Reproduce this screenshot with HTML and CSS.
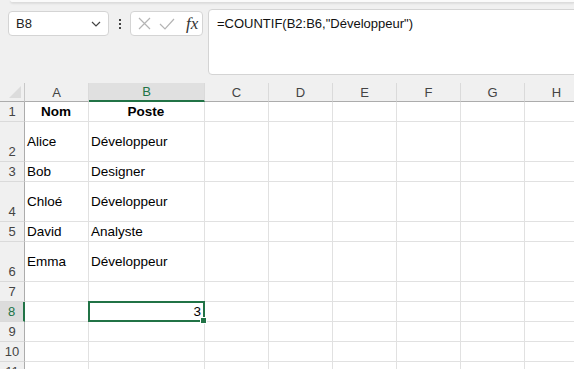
FILE: index.html
```html
<!DOCTYPE html>
<html>
<head>
    <title>COUNTIF</title>
    <link rel="stylesheet" href="styles.css">
</head>
<body>
    <div class="ribbon-edge"></div>

    <div class="formula-row">
        <div class="name-box">
            <span>B8</span>
            <svg width="10" height="6" viewBox="0 0 10 6"><path d="M1 1l4 4 4-4" fill="none" stroke="#444" stroke-width="1.2"/></svg>
        </div>
        <div class="dots"><i></i><i></i><i></i></div>
        <div class="fx-buttons">
            <svg width="13" height="13" viewBox="0 0 13 13"><path d="M1 1l11 11M12 1L1 12" stroke="#b4b4b4" stroke-width="1.2"/></svg>
            <svg width="16" height="14" viewBox="0 0 16 14"><path d="M1 7l5 5L15 2" fill="none" stroke="#b4b4b4" stroke-width="1.2"/></svg>
            <span class="fx">fx</span>
        </div>
        <div class="formula-bar">=COUNTIF(B2:B6,"Développeur")</div>
    </div>

    <div class="sheet">
        <div class="corner"></div>
        <div class="col-head">A</div>
        <div class="col-head active">B</div>
        <div class="col-head">C</div>
        <div class="col-head">D</div>
        <div class="col-head">E</div>
        <div class="col-head">F</div>
        <div class="col-head">G</div>
        <div class="col-head">H</div>

        <div class="row-head">1</div>
        <div class="cell bold center">Nom</div>
        <div class="cell bold center">Poste</div>
        <div class="cell"></div><div class="cell"></div><div class="cell"></div><div class="cell"></div><div class="cell"></div><div class="cell"></div>

        <div class="row-head">2</div>
        <div class="cell">Alice</div>
        <div class="cell">Développeur</div>
        <div class="cell"></div><div class="cell"></div><div class="cell"></div><div class="cell"></div><div class="cell"></div><div class="cell"></div>

        <div class="row-head">3</div>
        <div class="cell">Bob</div>
        <div class="cell">Designer</div>
        <div class="cell"></div><div class="cell"></div><div class="cell"></div><div class="cell"></div><div class="cell"></div><div class="cell"></div>

        <div class="row-head">4</div>
        <div class="cell">Chloé</div>
        <div class="cell">Développeur</div>
        <div class="cell"></div><div class="cell"></div><div class="cell"></div><div class="cell"></div><div class="cell"></div><div class="cell"></div>

        <div class="row-head">5</div>
        <div class="cell">David</div>
        <div class="cell">Analyste</div>
        <div class="cell"></div><div class="cell"></div><div class="cell"></div><div class="cell"></div><div class="cell"></div><div class="cell"></div>

        <div class="row-head">6</div>
        <div class="cell">Emma</div>
        <div class="cell">Développeur</div>
        <div class="cell"></div><div class="cell"></div><div class="cell"></div><div class="cell"></div><div class="cell"></div><div class="cell"></div>

        <div class="row-head">7</div>
        <div class="cell"></div><div class="cell"></div><div class="cell"></div><div class="cell"></div><div class="cell"></div><div class="cell"></div><div class="cell"></div><div class="cell"></div>

        <div class="row-head active">8</div>
        <div class="cell"></div>
        <div class="cell right selected">3<span class="handle"></span></div>
        <div class="cell"></div><div class="cell"></div><div class="cell"></div><div class="cell"></div><div class="cell"></div><div class="cell"></div>

        <div class="row-head">9</div>
        <div class="cell"></div><div class="cell"></div><div class="cell"></div><div class="cell"></div><div class="cell"></div><div class="cell"></div><div class="cell"></div><div class="cell"></div>

        <div class="row-head">10</div>
        <div class="cell"></div><div class="cell"></div><div class="cell"></div><div class="cell"></div><div class="cell"></div><div class="cell"></div><div class="cell"></div><div class="cell"></div>

        <div class="row-head">11</div>
        <div class="cell"></div><div class="cell"></div><div class="cell"></div><div class="cell"></div><div class="cell"></div><div class="cell"></div><div class="cell"></div><div class="cell"></div>
    </div>
</body>
</html>
```

FILE: styles.css
```css
body {
    margin: 0;
    background-color: #f0f0f0;
    font-family: "Liberation Sans", Arial, sans-serif;
    overflow: hidden;
    width: 574px;
    height: 369px;
}
.ribbon-edge {
    height: 2px;
    margin-left: 10px;
    background-color: #fafafa;
    border-bottom: 1px solid #dcdcdc;
    border-bottom-left-radius: 6px;
    box-shadow: 0 1px 2px rgba(0, 0, 0, 0.08);
}
.formula-row {
    display: flex;
    align-items: flex-start;
    margin-top: 6px;
    padding-left: 8px;
}
.formula-row > * {
    flex: none;
}
.name-box {
    box-sizing: border-box;
    width: 101px;
    height: 25px;
    margin-top: 2px;
    display: flex;
    align-items: center;
    justify-content: space-between;
    padding: 0 7px 0 7px;
    background-color: white;
    border: 1px solid #d4d4d4;
    border-radius: 4px;
    font-size: 13px;
    color: #222;
}
.dots {
    width: 21px;
    height: 25px;
    margin-top: 2px;
    display: flex;
    flex-direction: column;
    align-items: center;
    justify-content: center;
    gap: 2px;
}
.dots i {
    width: 2px;
    height: 2px;
    background-color: #444;
}
.fx-buttons {
    box-sizing: border-box;
    width: 73px;
    height: 25px;
    margin-top: 2px;
    display: flex;
    align-items: center;
    gap: 8px;
    padding-left: 7px;
    background-color: white;
    border: 1px solid #d4d4d4;
    border-radius: 4px;
}
.fx {
    font-family: "Liberation Serif", serif;
    font-style: italic;
    font-size: 17px;
    color: #333;
    margin-left: 3px;
}
.formula-bar {
    box-sizing: border-box;
    width: 380px;
    height: 66px;
    margin-left: 5px;
    padding: 6px 8px;
    background-color: white;
    border: 1px solid #d4d4d4;
    border-radius: 4px;
    font-size: 13px;
    color: #111;
}
.sheet {
    display: grid;
    grid-template-columns: 25px 64px 116px repeat(6, 64px);
    grid-template-rows: 19px 20px 40px 20px 40px 20px 40px 20px 20px 20px 20px 20px;
    margin-top: 8px;
    background-color: white;
}
.corner {
    position: relative;
    background-color: #f0f0f0;
    border-right: 1px solid #c8c8c8;
    border-bottom: 1px solid #acacac;
}
.corner::after {
    content: "";
    position: absolute;
    right: 3px;
    bottom: 3px;
    border-left: 12px solid transparent;
    border-bottom: 12px solid #dcdcdc;
}
.col-head {
    display: flex;
    align-items: center;
    justify-content: center;
    background-color: #f0f0f0;
    border-right: 1px solid #dadada;
    border-bottom: 1px solid #acacac;
    font-size: 13px;
    color: #444;
}
.col-head.active {
    background-color: #e0e0e0;
    color: #217346;
    border-bottom: 2px solid #217346;
}
.row-head {
    display: flex;
    align-items: flex-end;
    justify-content: center;
    padding-bottom: 1px;
    background-color: #f0f0f0;
    border-right: 1px solid #acacac;
    border-bottom: 1px solid #dadada;
    font-size: 13px;
    line-height: 17px;
    color: #444;
}
.row-head.active {
    background-color: #dcdcdc;
    color: #217346;
    border-right: 2px solid #217346;
}
.cell {
    display: flex;
    align-items: center;
    padding: 0 3px 0 2px;
    border-right: 1px solid #e1e1e1;
    border-bottom: 1px solid #e1e1e1;
    font-size: 13.5px;
    color: #000;
    white-space: nowrap;
    overflow: hidden;
}
.cell.bold {
    font-weight: bold;
}
.cell.center {
    justify-content: center;
}
.cell.right {
    justify-content: flex-end;
}
.cell.selected {
    position: relative;
    overflow: visible;
}
.cell.selected::after {
    content: "";
    position: absolute;
    left: -1px;
    top: -1px;
    right: -1px;
    bottom: -1px;
    border: 2px solid #217346;
}
.handle {
    position: absolute;
    right: -3px;
    bottom: -3px;
    width: 5px;
    height: 5px;
    background-color: #217346;
    border: 1px solid white;
    z-index: 1;
}
```
